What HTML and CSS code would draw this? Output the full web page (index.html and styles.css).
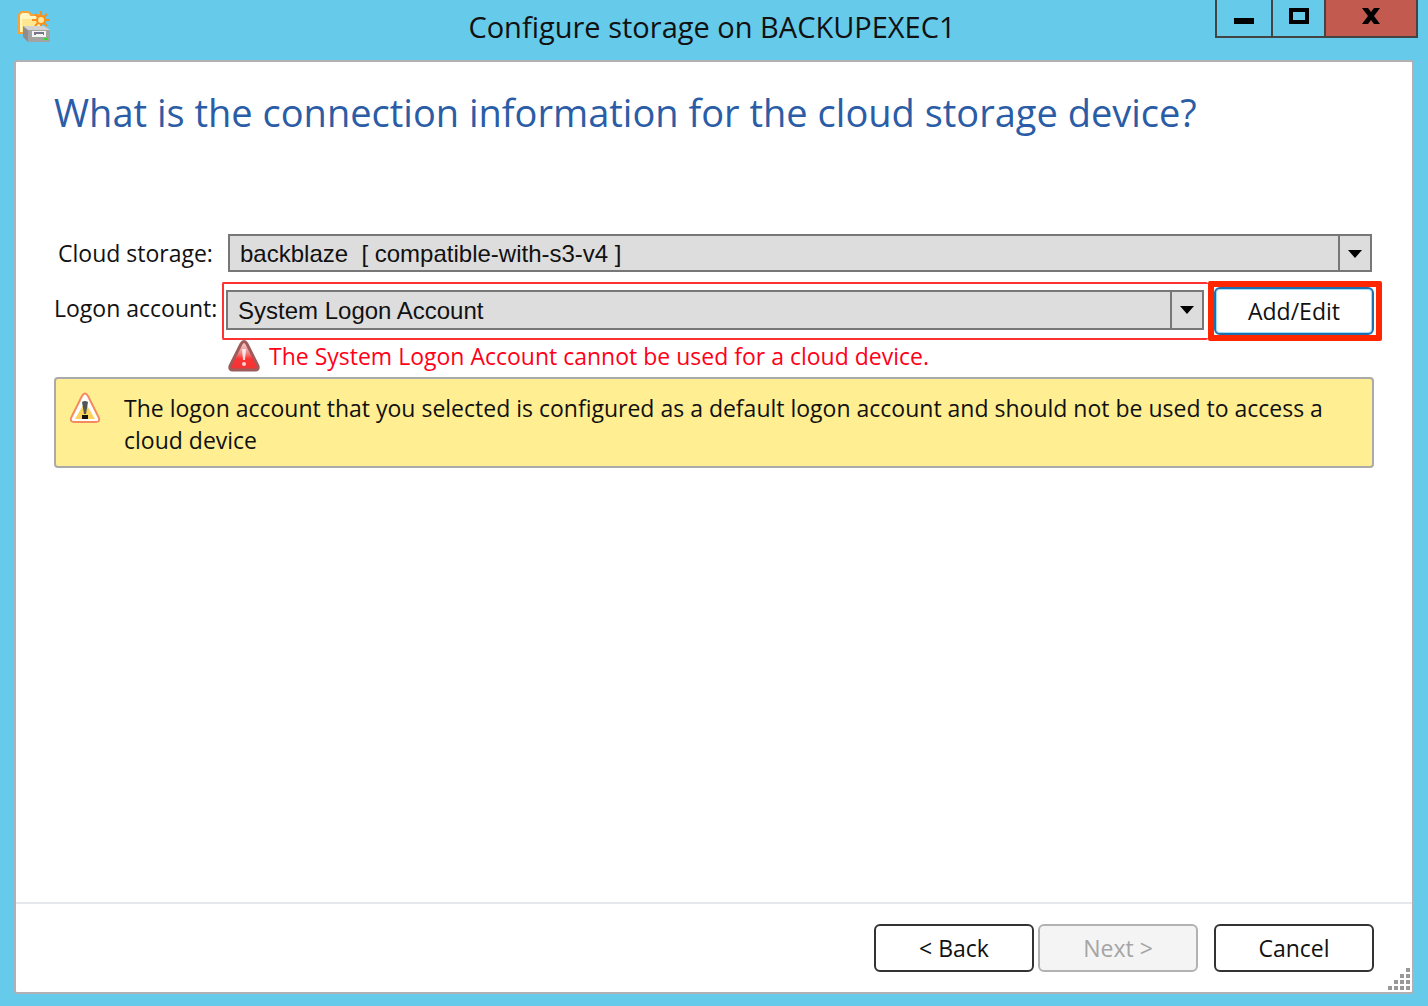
FILE: index.html
```
<!DOCTYPE html>
<html lang="en">
<head>
  <meta charset="UTF-8" />
  <meta name="viewport" content="width=device-width, initial-scale=1.0" />
  <title>Configure storage on BACKUPEXEC1</title>
  <link rel="stylesheet" href="styles.css">
</head>
<body>
  <header class="titlebar">
    <svg class="app-icon" viewBox="0 0 34 34" aria-hidden="true">
      <path d="M2 23V6q0-3 3-4h5q3 0 4 3h10v18z" fill="#fff6c4" stroke="#f5a43a" stroke-width="2" />
      <path d="M5 22V9h15v13z" fill="#fbe06e" opacity=".6" />
      <path d="M24 1v18M15 10h18M18 4l12 12M30 4L18 16" stroke="#f7901e" stroke-width="2" />
      <circle cx="24" cy="10" r="5" fill="#f7901e" />
      <circle cx="24" cy="10" r="3" fill="#ffe9a0" />
      <path d="M6 16h21l6 4H11z" fill="#d2d2d2" />
      <path d="M6 16l5 4v12l-5-5z" fill="#8d8d8d" />
      <path d="M11 20h22v12H11z" fill="#a3a3a3" />
      <path d="M15 21h14v6H15z" fill="#f4f4f4" />
      <path d="M17 22h10v3H17z" fill="#778" />
      <path d="M19 24h7v2h-7z" fill="#f4f4f4" />
      <path d="M27 28h4v2h-4z" fill="#2de02d" />
    </svg>
    <h1>Configure storage on BACKUPEXEC1</h1>
    <div class="window-buttons">
      <button type="button" class="minimize" aria-label="Minimize">
        <svg width="20" height="18" viewBox="0 0 20 18"><path d="M0 11h20v6H0z" /></svg>
      </button>
      <button type="button" class="maximize" aria-label="Maximize">
        <svg width="20" height="18" viewBox="0 0 20 18"><path d="M0 1h20v16H0zM4 5v8h12V5z" fill-rule="evenodd" /></svg>
      </button>
      <button type="button" class="close" aria-label="Close">
        <svg width="20" height="18" viewBox="0 0 20 18"><path d="M1 1h6l3 4 3-4h6l-6 8 6 8h-6l-3-4-3 4H1l6-8z" /></svg>
      </button>
    </div>
  </header>

  <main class="dialog">
    <form class="content" id="storageForm">
      <h2>What is the connection information for the cloud storage device?</h2>

      <div class="row storage">
        <label for="cloudStorage">Cloud storage:</label>
        <div class="dropdown">
          <select id="cloudStorage">
            <option>backblaze&nbsp; [ compatible-with-s3-v4 ]</option>
          </select>
          <span class="arrow"></span>
        </div>
      </div>

      <div class="row logon">
        <label for="logonAccount">Logon account:</label>
        <div class="invalid">
          <div class="dropdown">
            <select id="logonAccount">
              <option>System Logon Account</option>
            </select>
            <span class="arrow"></span>
          </div>
        </div>
        <div class="highlight">
          <button type="button" class="btn focused">Add/Edit</button>
        </div>
      </div>

      <div class="error">
        <svg width="32" height="32" viewBox="0 0 32 32" aria-hidden="true">
          <defs>
            <linearGradient id="red" x1="0" y1="0" x2="0" y2="1">
              <stop offset="0" stop-color="#f3d6d6" />
              <stop offset=".4" stop-color="#e88" />
              <stop offset=".6" stop-color="#f33" />
              <stop offset="1" stop-color="#e33" />
            </linearGradient>
          </defs>
          <path d="M13 4q3-5 6 0l11 22q1 4-3 4H5q-4 0-3-4z" fill="url(#red)" stroke="#a05a5a" stroke-width="3" />
          <path d="M14 9h4l-1 11h-2z" fill="#fff" opacity=".8" />
          <circle cx="16" cy="24" r="2" fill="#fff" opacity=".8" />
        </svg>
        <span>The System Logon Account cannot be used for a cloud device.</span>
      </div>

      <div class="warning">
        <svg width="32" height="32" viewBox="0 0 32 32" aria-hidden="true">
          <path d="M13 4q3-5 6 0l11 22q1 4-3 4H5q-4 0-3-4z" fill="#fff" stroke="#f58a5c" stroke-width="2" />
          <path d="M16 10l10 17H6z" fill="#fcd45c" />
          <path d="M13 10q3-2 6 0l-2 12h-2z" fill="#555" />
          <path d="M13 23h6v4h-6z" fill="#111" />
        </svg>
        <p>The logon account that you selected is configured as a default logon account and should not be used to access a cloud device</p>
      </div>
    </form>

    <footer class="actions">
      <button type="button" class="btn">&lt; Back</button>
      <button type="button" class="btn" disabled>Next &gt;</button>
      <button type="button" class="btn cancel">Cancel</button>
      <svg class="grip" width="24" height="24" viewBox="0 0 24 24" aria-hidden="true">
        <path d="M18 0h4v4h-4zM12 6h4v4h-4zM18 6h4v4h-4zM6 12h4v4H6zM12 12h4v4h-4zM18 12h4v4h-4zM0 18h4v4H0zM6 18h4v4H6zM12 18h4v4h-4zM18 18h4v4h-4z" fill="#999" />
      </svg>
    </footer>
  </main>
</body>
</html>
```
FILE: styles.css
```
* {
  box-sizing: border-box;
}
body {
  margin: 0;
  padding: 0 14px 12px;
  min-height: 100vh;
  display: flex;
  flex-direction: column;
  background: #66caea;
  color: #111;
  font-family: "Open Sans", "Noto Sans", sans-serif;
  font-size: 23px;
  line-height: 32px;
}
h1, h2, p {
  margin: 0;
  font-weight: normal;
}
button, select {
  font: inherit;
  color: inherit;
}

/* title bar */
.titlebar {
  height: 60px;
  display: grid;
  grid-template-columns: 1fr auto 1fr;
  align-items: start;
}
.app-icon {
  width: 34px;
  height: 34px;
  margin: 10px 0 0 3px;
}
.titlebar h1 {
  padding-right: 4px;
  font-size: 29px;
  line-height: 54px;
}
.window-buttons {
  justify-self: end;
  display: flex;
  height: 38px;
  margin-right: -4px;
  border: 2px solid #444;
  border-top: none;
}
.window-buttons button {
  display: flex;
  justify-content: center;
  padding: 7px 0 0;
  border: none;
  background: none;
}
.window-buttons .minimize {
  width: 56px;
  border-right: 2px solid #444;
}
.window-buttons .maximize {
  width: 53px;
  border-right: 2px solid #444;
}
.window-buttons .close {
  width: 90px;
  background: #c35a50;
}

/* dialog body */
.dialog {
  flex: 1;
  display: flex;
  flex-direction: column;
  background: #fff;
  border: 2px solid #b0b0b5;
  border-radius: 3px;
}
.content {
  flex: 1;
  padding: 20px 38px;
}
h2 {
  margin-bottom: 92px;
  color: #2b5da6;
  font-size: 38px;
  line-height: 60px;
}
.row {
  display: flex;
}
.storage {
  padding: 0 2px 0 4px;
  margin-bottom: 10px;
}
.storage label {
  width: 170px;
  line-height: 38px;
}
.storage .dropdown {
  height: 38px;
}
.logon {
  margin-right: -8px;
}
.logon label {
  width: 168px;
  line-height: 52px;
}
.dropdown {
  position: relative;
  flex: 1;
  height: 40px;
}
.dropdown select {
  width: 100%;
  height: 100%;
  padding: 2px 44px 0 10px;
  appearance: none;
  background: #ddd;
  border: 2px solid #777;
  border-radius: 0;
  font-family: "Liberation Sans", Arial, sans-serif;
  font-size: 24px;
}
.arrow {
  position: absolute;
  top: 0;
  right: 0;
  width: 34px;
  height: 100%;
  border: 2px solid #777;
  pointer-events: none;
}
.arrow::after {
  content: "";
  position: absolute;
  top: 14px;
  left: 8px;
  border: 7px solid transparent;
  border-top: 8px solid #000;
  border-bottom: none;
}
.invalid {
  flex: 1;
  display: flex;
  height: 58px;
  padding: 6px 4px 8px 2px;
  border: 2px solid #f33;
  border-right: none;
  border-radius: 2px;
}
.highlight {
  height: 60px;
  margin: -1px 0;
  border: 6px solid #ff2600;
  border-radius: 2px;
}

.btn {
  width: 160px;
  height: 48px;
  padding: 0;
  background: #fff;
  border: 2px solid #333;
  border-radius: 6px;
}
.btn:disabled {
  background: #f4f4f4;
  border-color: #b2b2b2;
  color: #a5a5a5;
}
.btn.focused {
  margin-right: 2px;
  border-color: #1d6fae;
  box-shadow: inset 0 0 0 1px #9fdcfa;
}

/* messages */
.error {
  display: flex;
  gap: 9px;
  padding-left: 174px;
  margin-bottom: 5px;
  color: #ff0019;
}
.warning {
  display: flex;
  gap: 23px;
  padding: 13px 40px 10px 13px;
  background: #ffef92;
  border: 2px solid #aaa;
  border-radius: 4px;
}
.warning svg {
  flex: none;
}

/* footer */
.actions {
  position: relative;
  display: flex;
  justify-content: flex-end;
  gap: 4px;
  padding: 20px 38px;
  border-top: 2px solid #e5e9ee;
}
.actions .cancel {
  margin-left: 12px;
}
.grip {
  position: absolute;
  right: 0;
  bottom: 0;
}
```
